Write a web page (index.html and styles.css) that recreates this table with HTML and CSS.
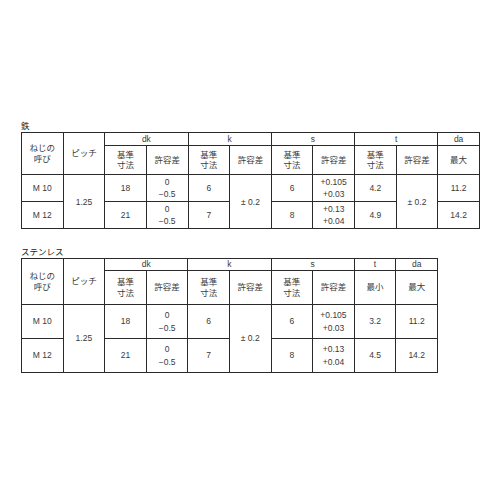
FILE: index.html
```html
<!DOCTYPE html>
<html lang="ja">
<head>
<meta charset="utf-8">
<link rel="stylesheet" href="styles.css">
</head>
<body>
<div class="page">
  <div class="title">鉄</div>
  <table class="spec spec-iron">
    <colgroup>
      <col><col><col><col><col><col><col><col><col><col><col>
    </colgroup>
    <tr class="h1">
      <td rowspan="2">ねじの<br>呼び</td>
      <td rowspan="2">ピッチ</td>
      <td colspan="2">dk</td>
      <td colspan="2">k</td>
      <td colspan="2">s</td>
      <td colspan="2">t</td>
      <td>da</td>
    </tr>
    <tr class="h2">
      <td>基準<br>寸法</td><td>許容差</td>
      <td>基準<br>寸法</td><td>許容差</td>
      <td>基準<br>寸法</td><td>許容差</td>
      <td>基準<br>寸法</td><td>許容差</td>
      <td>最大</td>
    </tr>
    <tr class="d">
      <td>M 10</td>
      <td rowspan="2">1.25</td>
      <td>18</td><td>0<br>−0.5</td>
      <td>6</td><td rowspan="2">± 0.2</td>
      <td>6</td><td>+0.105<br>+0.03</td>
      <td>4.2</td><td rowspan="2">± 0.2</td>
      <td>11.2</td>
    </tr>
    <tr class="d">
      <td>M 12</td>
      <td>21</td><td>0<br>−0.5</td>
      <td>7</td>
      <td>8</td><td>+0.13<br>+0.04</td>
      <td>4.9</td>
      <td>14.2</td>
    </tr>
  </table>

  <div class="title title-second">ステンレス</div>
  <table class="spec spec-stainless">
    <colgroup>
      <col><col><col><col><col><col><col><col><col><col>
    </colgroup>
    <tr class="h1">
      <td rowspan="2">ねじの<br>呼び</td>
      <td rowspan="2">ピッチ</td>
      <td colspan="2">dk</td>
      <td colspan="2">k</td>
      <td colspan="2">s</td>
      <td>t</td>
      <td>da</td>
    </tr>
    <tr class="h2">
      <td>基準<br>寸法</td><td>許容差</td>
      <td>基準<br>寸法</td><td>許容差</td>
      <td>基準<br>寸法</td><td>許容差</td>
      <td>最小</td>
      <td>最大</td>
    </tr>
    <tr class="d">
      <td>M 10</td>
      <td rowspan="2">1.25</td>
      <td>18</td><td>0<br>−0.5</td>
      <td>6</td><td rowspan="2">± 0.2</td>
      <td>6</td><td>+0.105<br>+0.03</td>
      <td>3.2</td>
      <td>11.2</td>
    </tr>
    <tr class="d">
      <td>M 12</td>
      <td>21</td><td>0<br>−0.5</td>
      <td>7</td>
      <td>8</td><td>+0.13<br>+0.04</td>
      <td>4.5</td>
      <td>14.2</td>
    </tr>
  </table>
</div>
</body>
</html>
```

FILE: styles.css
```css
html, body {
  margin: 0;
  padding: 0;
  background: #fff;
}

.page {
  padding: 120px 0 0 21px;
  font-family: "Liberation Sans", "Noto Sans CJK JP", sans-serif;
  color: #3a3a3a;
  font-size: 8.5px;
}

.title {
  height: 12px;
  line-height: 12px;
  font-size: 8.5px;
  color: #222;
}

.title-second {
  margin-top: 17px;
}

.spec {
  border-collapse: collapse;
  table-layout: fixed;
}

.spec-iron {
  width: 459px;
}

.spec-stainless {
  width: 417px;
}

.spec td {
  border: 1px solid #2a2a2a;
  padding: 0;
  text-align: center;
  vertical-align: middle;
  line-height: 10.5px;
  font-size: 8.5px;
}

.spec-iron .h1 { height: 13px; }
.spec-iron .h2 { height: 29px; }
.spec-iron .d { height: 27px; }
.spec-iron .d td { line-height: 12px; }

.spec-stainless .h1 { height: 12px; }
.spec-stainless .h2 { height: 34px; }
.spec-stainless .h2 td { line-height: 11px; }
.spec-stainless .d { height: 34px; }
.spec-stainless .d td { line-height: 13px; }
```
